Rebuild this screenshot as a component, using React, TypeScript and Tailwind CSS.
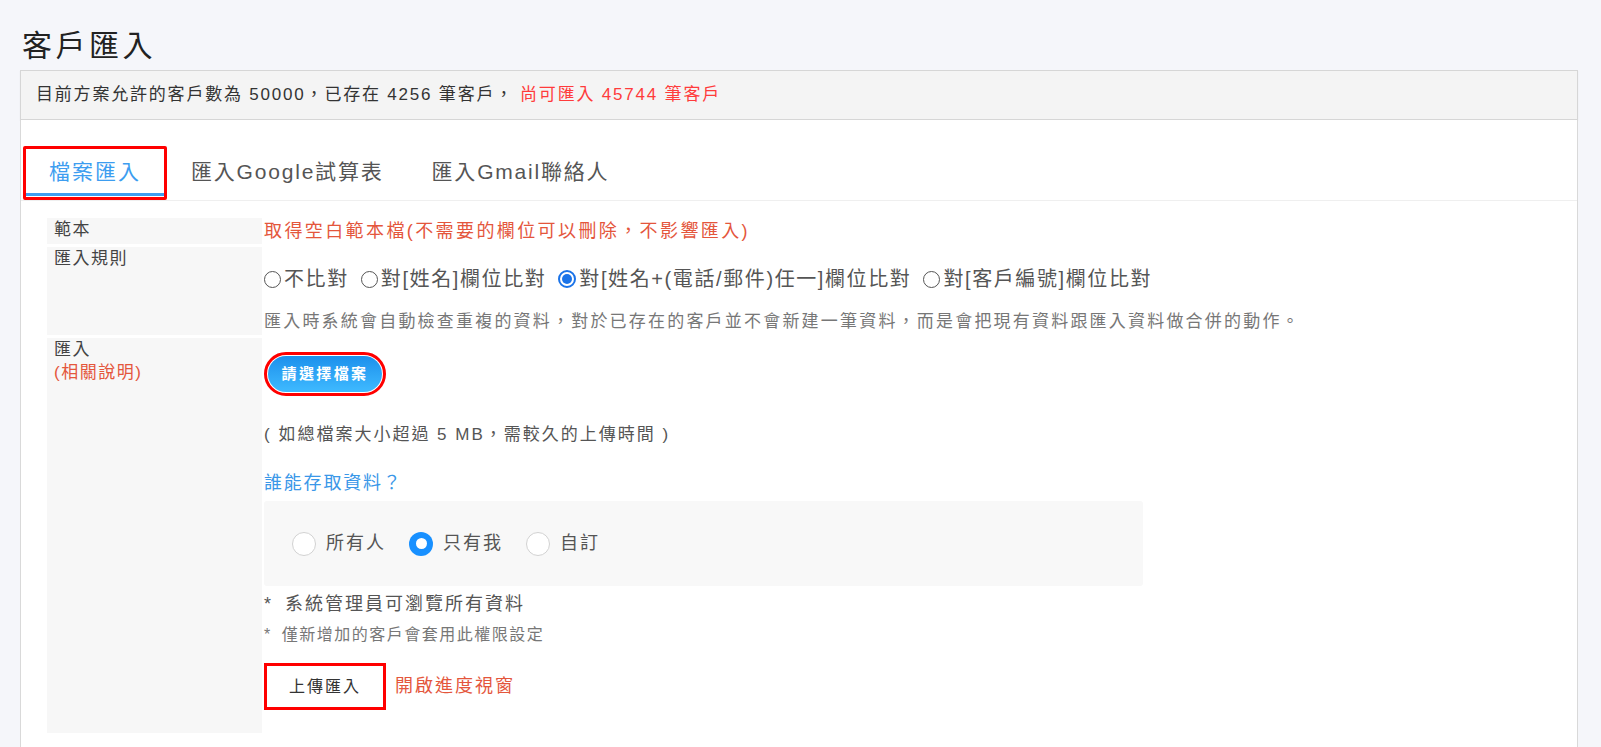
import React from 'react'

const FONT = "font-['Liberation_Sans','Noto_Sans_CJK_TC',sans-serif]"

// small native-looking radio used in the rule row
function RuleRadio({ checked }: { checked?: boolean }) {
  if (checked) {
    return (
      <span className="inline-flex h-[18px] w-[18px] shrink-0 items-center justify-center rounded-full border-2 border-[#1a73e8] bg-white">
        <span className="h-[10px] w-[10px] rounded-full bg-[#1a73e8]" />
      </span>
    )
  }
  return <span className="inline-block h-[17px] w-[17px] shrink-0 rounded-full border border-[#555] bg-white" />
}

// bigger styled radio used for the access setting
function AccessRadio({ checked }: { checked?: boolean }) {
  if (checked) {
    return (
      <span className="inline-flex h-[24px] w-[24px] shrink-0 items-center justify-center rounded-full bg-[#1890ff]">
        <span className="h-[11px] w-[11px] rounded-full bg-white" />
      </span>
    )
  }
  return <span className="inline-block h-[24px] w-[24px] shrink-0 rounded-full border-[1.5px] border-[#d2d2d2] bg-white" />
}

const rules = [
  { label: '不比對' },
  { label: '對[姓名]欄位比對' },
  { label: '對[姓名+(電話/郵件)任一]欄位比對', checked: true },
  { label: '對[客戶編號]欄位比對' },
]

const access = [
  { label: '所有人' },
  { label: '只有我', checked: true },
  { label: '自訂' },
]

export default function App() {
  return (
    <div className={`${FONT} min-h-screen bg-[#f5f6fa] pl-[20px] pr-[23px]`}>
      <h1 className="pl-[2px] pt-[28px] pb-[6px] text-[30px] leading-[36px] tracking-[3.5px] text-[#222]">客戶匯入</h1>

      <div className="flex h-[50px] items-center border border-[#d6d6d6] bg-[#f4f4f4] pl-[15px] text-[17px] tracking-[1.8px] text-[#333] shadow-[0_1px_1px_rgba(0,0,0,0.08)]">
        <span>目前方案允許的客戶數為 50000，已存在 4256 筆客戶，</span>
        <span className="ml-[6px] text-[#ff3b3b]">尚可匯入 45744 筆客戶</span>
      </div>

      <div className="min-h-[630px] border-x border-b border-[#d9d9d9] bg-white pt-[26px]">
        {/* tabs */}
        <div className="flex h-[55px] items-stretch border-b border-[#efefef] text-[21px] tracking-[2px]">
          <div className="ml-[2px] flex flex-col rounded-[2px] border-[3px] border-[#ff0000] px-[23px] text-[#3d9df0]">
            <span className="flex-1 pt-[8px] leading-[30px]">檔案匯入</span>
            <span className="-mx-[23px] mb-[1px] h-[3px] bg-[#3d9df0]" />
          </div>
          <div className="ml-[22px] px-[2px] pt-[11px] leading-[30px] tracking-[1.8px] text-[#555]">匯入Google試算表</div>
          <div className="ml-[46px] pt-[11px] leading-[30px] tracking-[1.8px] text-[#555]">匯入Gmail聯絡人</div>
        </div>

        {/* form table */}
        <div className="ml-[26px] mt-[17px] flex flex-col gap-[3px]">
          <div className="flex">
            <div className="w-[215px] shrink-0 bg-[#f7f7f7] pl-[7px] text-[17px] leading-[24px] tracking-[1.5px] text-[#444]">範本</div>
            <div className="pl-[2px] text-[18px] leading-[26px] tracking-[2.4px] text-[#e4563c]">
              取得空白範本檔(不需要的欄位可以刪除，不影響匯入)
            </div>
          </div>

          <div className="flex">
            <div className="h-[88px] w-[215px] shrink-0 bg-[#f7f7f7] pl-[7px] text-[17px] leading-[24px] tracking-[1.5px] text-[#444]">匯入規則</div>
            <div className="pl-[2px]">
              <div className="mt-[19px] flex items-center text-[20px] leading-[26px] tracking-[1.6px] text-[#555]">
                {rules.map((r, i) => (
                  <span key={i} className="mr-[12px] flex items-center gap-[3px]">
                    <RuleRadio checked={r.checked} />
                    <span>{r.label}</span>
                  </span>
                ))}
              </div>
              <div className="mt-[18px] text-[17px] leading-[24px] tracking-[2.2px] text-[#777]">
                匯入時系統會自動檢查重複的資料，對於已存在的客戶並不會新建一筆資料，而是會把現有資料跟匯入資料做合併的動作。
              </div>
            </div>
          </div>

          <div className="flex">
            <div className="h-[395px] w-[215px] shrink-0 bg-[#f7f7f7] pl-[7px] text-[17px] leading-[23px] tracking-[1.5px]">
              <div className="text-[#444]">匯入</div>
              <div className="text-[#e4563c]">(相關說明)</div>
            </div>
            <div className="flex flex-1 flex-col items-start pl-[2px]">
              <div className="mt-[14px] rounded-full border-[3px] border-[#ff0000] p-[1px]">
                <button className="h-[36px] w-[114px] rounded-full bg-gradient-to-b from-[#1c90ec] to-[#3fbaff] text-[15px] font-bold tracking-[2.4px] text-white">
                  請選擇檔案
                </button>
              </div>

              <div className="mt-[27px] text-[17px] leading-[24px] tracking-[2px] text-[#555]">
                ( 如總檔案大小超過 5 MB，需較久的上傳時間 )
              </div>

              <div className="mt-[24px] text-[18px] leading-[24px] tracking-[1.8px] text-[#3a97e8]">誰能存取資料？</div>

              <div className="mt-[6px] flex h-[85px] w-[879px] items-center gap-[23px] rounded-[3px] bg-[#f8f8f8] pl-[28px]">
                {access.map((a, i) => (
                  <span key={i} className="flex items-center gap-[10px] text-[18px] tracking-[2px] text-[#555]">
                    <AccessRadio checked={a.checked} />
                    <span>{a.label}</span>
                  </span>
                ))}
              </div>

              <div className="mt-[6px] text-[18px] leading-[24px] tracking-[2px] text-[#555]">
                <span className="mr-[12px]">*</span>系統管理員可瀏覽所有資料
              </div>
              <div className="mt-[7px] text-[16px] leading-[24px] tracking-[1.5px] text-[#777]">
                <span className="mr-[10px]">*</span>僅新增加的客戶會套用此權限設定
              </div>

              <div className="mt-[16px] flex items-center">
                <button className="h-[47px] w-[122px] border-[3px] border-[#ff0000] bg-white text-[16px] tracking-[2px] text-[#333]">
                  上傳匯入
                </button>
                <span className="ml-[9px] text-[18px] tracking-[2px] text-[#e4563c]">開啟進度視窗</span>
              </div>
            </div>
          </div>
        </div>
      </div>
    </div>
  )
}
